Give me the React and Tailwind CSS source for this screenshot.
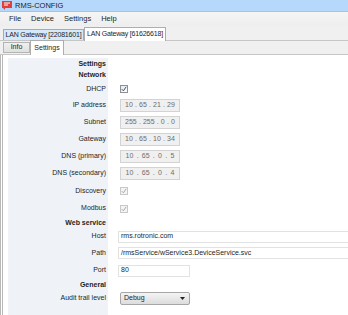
import React from 'react';

const font = { fontFamily: '"Liberation Sans", Arial, sans-serif' };

function IpBox({ parts }) {
  return (
    <div className="flex h-[13px] w-[60px] items-center justify-around border border-[#d3d3d3] bg-[#f0f0f0] px-[3px] text-[#6d6d6d]">
      <span>{parts[0]}</span>
      <span>.</span>
      <span>{parts[1]}</span>
      <span>.</span>
      <span>{parts[2]}</span>
      <span>.</span>
      <span>{parts[3]}</span>
    </div>
  );
}

function Check({ disabled }) {
  return (
    <div
      className={`flex h-[8px] w-[8px] items-center justify-center border ${
        disabled ? 'border-[#c8c8c8] bg-[#f4f4f4]' : 'border-[#8e8f8f] bg-gradient-to-br from-[#e8e8e8] to-[#ffffff]'
      }`}
    >
      <svg width="6" height="6" viewBox="0 0 6 6">
        <path
          d="M0.8 3.2 L2.4 4.8 L5.2 0.8"
          fill="none"
          stroke={disabled ? '#a8a8a8' : '#2a4c94'}
          strokeWidth="1"
        />
      </svg>
    </div>
  );
}

function Row({ label, bold, h = 'h-[17px]', children }) {
  return (
    <div className={`flex ${h} items-center`}>
      <div className={`w-[100px] shrink-0 whitespace-nowrap pr-[2px] text-right ${bold ? 'font-bold' : ''}`}>{label}</div>
      <div className="flex min-w-0 flex-1 items-center pl-[12px]">{children}</div>
    </div>
  );
}

export default function App() {
  return (
    <div className="h-[315px] w-[348px] overflow-hidden whitespace-nowrap bg-white text-[7px] text-[#1e1e1e]" style={font}>
      {/* title bar */}
      <div className="flex h-[12px] items-center gap-[3px] border-b border-[#a3c3e3] bg-[#b6d8fb] pl-[2px] text-[7.5px] text-[#222]">
        <svg width="10" height="9" viewBox="0 0 10 9">
          <rect x="0" y="0" width="10" height="7" fill="#e0403c" />
          <path d="M2 2 H8 M2 4 H6" stroke="#fff" strokeWidth="1" />
          <path d="M1 7 L3 9 L3 7 Z" fill="#e0403c" />
        </svg>
        <span>RMS-CONFIG</span>
      </div>

      {/* menu */}
      <div className="flex h-[14px] items-center gap-[10px] bg-gradient-to-b from-[#f5f5f5] to-[#eeeeee] pl-[9px] text-[7.5px]">
        <span>File</span>
        <span>Device</span>
        <span>Settings</span>
        <span>Help</span>
      </div>

      {/* document tabs */}
      <div className="flex h-[14px] items-end bg-[#f0f0f0] pl-[3px] tracking-[-0.2px]">
        <div className="flex h-[11px] w-[81px] shrink-0 items-center justify-center border border-b-0 border-[#7eb4ea] bg-[#d5e9fa]">
          LAN Gateway [22081601]
        </div>
        <div className="-mb-px flex h-[14px] w-[82px] shrink-0 items-center justify-center border border-b-0 border-[#adadad] bg-white">
          LAN Gateway [61626618]
        </div>
      </div>

      {/* inner tabs */}
      <div className="flex h-[15px] items-end border-y border-[#c6c6c6] bg-[#f0f0f0] pl-[3px]">
        <div className="mb-[1px] flex h-[11px] w-[27px] shrink-0 items-center justify-center border border-[#b4b4b4] bg-gradient-to-b from-[#f0f0f0] to-[#e0e0e0]">
          Info
        </div>
        <div className="-mb-px flex h-[15px] w-[34px] shrink-0 items-center justify-center border border-b-0 border-[#adadad] bg-white">
          Settings
        </div>
      </div>

      {/* content */}
      <div className="flex h-full border-l-[3px] border-double border-[#b8b8b8]">
        <div className="w-[5px] shrink-0" />
        <div className="relative flex-1 pt-[3px]">
          <div className="absolute bottom-0 left-0 top-[3px] w-[100px] bg-[#eff3f8]" />
          <div className="relative">
            <Row label="Settings" bold h="h-[12px]" />
            <Row label="Network" bold h="h-[11px]" />
            <Row label="DHCP" h="h-[16px]">
              <Check />
            </Row>
            <Row label="IP address">
              <IpBox parts={['10', '65', '21', '29']} />
            </Row>
            <Row label="Subnet">
              <IpBox parts={['255', '255', '0', '0']} />
            </Row>
            <Row label="Gateway">
              <IpBox parts={['10', '65', '10', '34']} />
            </Row>
            <Row label="DNS (primary)">
              <IpBox parts={['10', '65', '0', '5']} />
            </Row>
            <Row label="DNS (secondary)">
              <IpBox parts={['10', '65', '0', '4']} />
            </Row>
            <Row label="Discovery" h="h-[18px]">
              <Check disabled />
            </Row>
            <Row label="Modbus" h="h-[17px]">
              <Check disabled />
            </Row>
            <Row label="Web service" bold h="h-[12px]" />
            <Row label="Host" h="h-[15px]">
              <div className="-ml-[2px] flex h-[12px] w-[240px] shrink-0 items-center border border-[#e2e2e2] bg-white pl-[2px]">
                rms.rotronic.com
              </div>
            </Row>
            <Row label="Path" h="h-[18px]">
              <div className="-ml-[2px] flex h-[12px] w-[240px] shrink-0 items-center border border-[#e2e2e2] bg-white pl-[2px]">
                /rmsService/wService3.DeviceService.svc
              </div>
            </Row>
            <Row label="Port" h="h-[17px]">
              <div className="-ml-[2px] flex h-[12px] w-[72px] items-center border border-[#e2e2e2] bg-white pl-[2px]">
                80
              </div>
            </Row>
            <Row label="General" bold h="h-[12px]" />
            <Row label="Audit trail level" h="h-[15px]">
              <div className="flex h-[13px] w-[70px] items-center justify-between rounded-[2px] border border-[#a6a6a6] bg-gradient-to-b from-[#f4f4f4] to-[#dcdcdc] pl-[3px] pr-[4px]">
                <span>Debug</span>
                <svg width="5" height="3" viewBox="0 0 5 3">
                  <path d="M0 0 H5 L2.5 3 Z" fill="#222" />
                </svg>
              </div>
            </Row>
          </div>
        </div>
      </div>
    </div>
  );
}
